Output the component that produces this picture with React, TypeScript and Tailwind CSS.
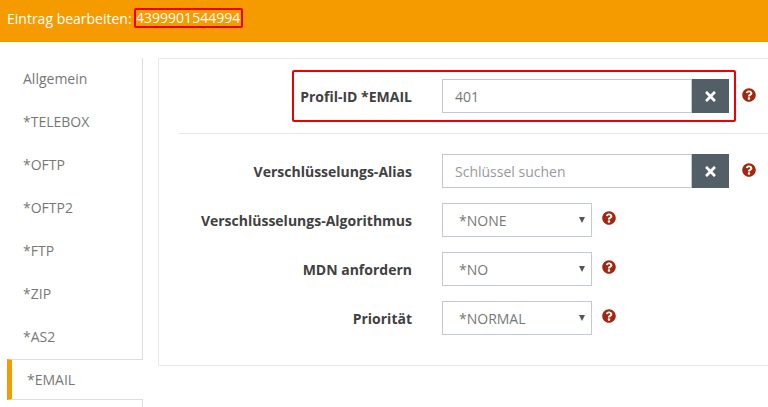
import { FaQuestionCircle, FaTimes } from 'react-icons/fa'

const tabs = ['Allgemein', '*TELEBOX', '*OFTP', '*OFTP2', '*FTP', '*ZIP', '*AS2']

function Help() {
  return <FaQuestionCircle size={14} className="text-[#a5260f] shrink-0" />
}

function Label({ children }: { children: string }) {
  return <div className="w-[233px] text-right text-[14px] font-bold text-[#414141] shrink-0">{children}</div>
}

function SearchField({ value, placeholder }: { value?: string; placeholder?: string }) {
  return (
    <div className="flex ml-[30px] h-[34px] w-[287px]">
      <div className={`flex-1 border border-[#c1cad6] bg-white pl-[12px] text-[14px] leading-[33px] ${value ? 'text-[#777777]' : 'text-[#999999]'}`}>
        {value ?? placeholder}
      </div>
      <div className="w-[37px] bg-[#535f66] flex items-center justify-center">
        <FaTimes size={15} className="text-white" />
      </div>
    </div>
  )
}

function SelectRow({ label, value }: { label: string; value: string }) {
  return (
    <div className="flex items-center h-[34px] mb-[15px]">
      <Label>{label}</Label>
      <div className="ml-[30px] w-[150px] h-[34px] border border-[#c1cad6] bg-white flex items-center justify-between pl-[16px] pr-[6px] text-[14px] text-[#777777]">
        <span>{value}</span>
        <span className="w-0 h-0 border-x-[3px] border-x-transparent border-t-[6px] border-t-[#555555]" />
      </div>
      <span className="ml-[10px] -mt-[4px] flex"><Help /></span>
    </div>
  )
}

export default function App() {
  return (
    <div className="relative w-[768px] h-[407px] overflow-hidden bg-white font-['Open_Sans',sans-serif]">
      <div className="h-[42px] bg-[#f59b00] flex items-center pl-[7px] pb-[6px] text-[14px] text-white">
        <span>Eintrag bearbeiten:</span>
        <span className="ml-[2px] h-[20px] w-[109px] border-2 border-[#f00000] rounded-[2px] flex items-center justify-center leading-none">4399901544994</span>
      </div>

      <div className="flex pt-[16px]">
        <div className="ml-[7px] w-[136px] shrink-0 border-r border-[#dddddd]">
          {tabs.map((t) => (
            <div key={t} className="h-[43px] pl-[16px] pb-[2px] flex items-center text-[14px] text-[#777777]">{t}</div>
          ))}
          <div className="h-[41px] -mr-px flex items-center pl-[15px] border-y border-[#dddddd] border-l-[5px] border-l-[#f59b00] bg-white text-[14px] text-[#777777]">
            *EMAIL
          </div>
          <div className="h-[10px]" />
        </div>

        <div className="ml-[15px] flex-1 h-[308px] border border-r-0 border-[#e7eaec] pt-[11px] pl-[20px]">
          <div className="flex items-center h-[52px]">
            <Label>Profil-ID *EMAIL</Label>
            <SearchField value="401" />
            <span className="ml-[13px] -mt-[2px] flex"><Help /></span>
          </div>
          <div className="border-t border-[#e7eaec] mt-[11px] mb-[20px]" />
          <div className="flex items-center h-[34px] mb-[15px]">
            <Label>Verschlüsselungs-Alias</Label>
            <SearchField placeholder="Schlüssel suchen" />
            <span className="ml-[13px] -mt-[2px] flex"><Help /></span>
          </div>
          <SelectRow label="Verschlüsselungs-Algorithmus" value="*NONE" />
          <SelectRow label="MDN anfordern" value="*NO" />
          <SelectRow label="Priorität" value="*NORMAL" />
        </div>
      </div>
      <div className="absolute left-[292px] top-[70px] w-[444px] h-[52px] border-2 border-[#f00000] rounded-[2px] pointer-events-none" />
    </div>
  )
}
